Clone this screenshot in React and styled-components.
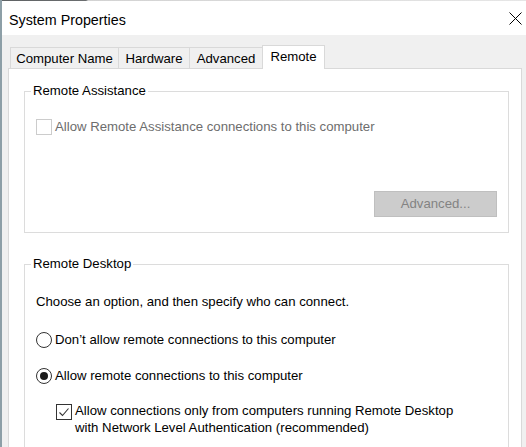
import React from "react";
import styled, { createGlobalStyle } from "styled-components";

const Global = createGlobalStyle`
  html, body { margin: 0; padding: 0; background: #f0f0f0; }
  body { font-family: "Liberation Sans", Arial, sans-serif; }
  * { box-sizing: border-box; }
`;

const Frame = styled.div`
  width: 526px;
  height: 447px;
  overflow: hidden;
  display: flex;
  flex-direction: column;
  border-left: 2px solid #8d9fa7;
  background: #f0f0f0;
  font-size: 13.2px;
  color: #000;
`;

const TopEdge = styled.div`
  height: 1px;
  flex: none;
  background: linear-gradient(to right, #5f6264 0, #6a6d6f 84px, #d2d2d2 86px, #e6e6e6 100%);
`;

const TitleBar = styled.div`
  height: 34px;
  flex: none;
  background: #ffffff;
  display: flex;
  align-items: center;
  justify-content: space-between;
  padding: 0 4px 0 7px;
`;

const Title = styled.span`
  font-size: 14.3px;
  line-height: 18px;
  padding-top: 3px;
  color: #000;
`;

const CloseButton = styled.span`
  display: flex;
  width: 13px;
  height: 13px;
  margin-top: 1px;
`;

const Body = styled.div`
  flex: 1;
  display: flex;
  flex-direction: column;
  padding: 11px 4px 0 6px;
  min-height: 0;
`;

const TabRow = styled.div`
  display: flex;
  align-items: flex-end;
  height: 23px;
  padding-left: 2px;
  position: relative;
  z-index: 1;
  margin-bottom: -1px;
`;

const Tab = styled.div`
  width: ${(p) => p.$w}px;
  height: ${(p) => (p.$active ? 24 : 22)}px;
  margin-right: -1px;
  border: 1px solid #d9d9d9;
  border-bottom: ${(p) => (p.$active ? "none" : "1px solid #d9d9d9")};
  background: ${(p) => (p.$active ? "#ffffff" : "#f0f0f0")};
  display: flex;
  align-items: center;
  justify-content: center;
  padding-top: ${(p) => (p.$active ? 0 : 1)}px;
  padding-bottom: ${(p) => (p.$active ? 2 : 0)}px;
  line-height: 16px;
  white-space: nowrap;
  position: relative;
  z-index: ${(p) => (p.$active ? 2 : 0)};
`;

const Panel = styled.div`
  flex: 1;
  background: #ffffff;
  border: 1px solid #d9d9d9;
  border-bottom: none;
  padding: 14px 12px 0 15px;
  display: flex;
  flex-direction: column;
`;

const Group = styled.fieldset`
  margin: ${(p) => (p.$first ? 0 : 23)}px 0 0 0;
  border: 1px solid #dcdcdc;
  padding: ${(p) => p.$pt}px 11px ${(p) => p.$pb}px 11px;
  min-width: 0;
  display: flex;
  flex-direction: column;
`;

const Legend = styled.legend`
  padding: 0 2px;
  margin-left: -5px;
  line-height: 16px;
  color: #000;
`;

const Row = styled.div`
  display: flex;
  align-items: flex-start;
  gap: 3px;
  margin-top: ${(p) => p.$mt || 0}px;
  margin-left: ${(p) => p.$ml || 0}px;
  line-height: ${(p) => p.$lh || 16}px;
`;

const Label = styled.span`
  color: ${(p) => (p.$disabled ? "#6d6d6d" : "#000")};
  white-space: nowrap;
`;

const Text = styled.div`
  line-height: 16px;
  margin-top: ${(p) => p.$mt || 0}px;
`;

const CheckBox = styled.span`
  flex: none;
  width: 16px;
  height: 16px;
  margin-top: ${(p) => p.$mt || 0}px;
  border: 1px solid ${(p) => (p.$disabled ? "#cccccc" : "#333333")};
  background: #ffffff;
  display: flex;
  align-items: center;
  justify-content: center;
`;

const Radio = styled.span`
  flex: none;
  width: 16px;
  height: 16px;
  border-radius: 50%;
  border: 1px solid #333333;
  background: #ffffff;
  display: flex;
  align-items: center;
  justify-content: center;
  &::after {
    content: "";
    display: ${(p) => (p.$checked ? "block" : "none")};
    width: 8px;
    height: 8px;
    border-radius: 50%;
    background: #1a1a1a;
  }
`;

const ButtonRow = styled.div`
  display: flex;
  justify-content: flex-end;
  margin-top: 56px;
`;

const Button = styled.button`
  width: 123px;
  height: 26px;
  margin: 0;
  padding: 0;
  background: #cccccc;
  border: 1px solid #bfbfbf;
  color: #838383;
  font-family: inherit;
  font-size: 13.2px;
  line-height: 16px;
`;

export default function App() {
  return (
    <>
      <Global />
      <Frame>
        <TopEdge />
        <TitleBar>
          <Title>System Properties</Title>
          <CloseButton>
            <svg width="13" height="13" viewBox="0 0 13 13">
              <path d="M0.5 0.5 L12.5 12.5 M12.5 0.5 L0.5 12.5" stroke="#000" strokeWidth="1" fill="none" />
            </svg>
          </CloseButton>
        </TitleBar>
        <Body>
          <TabRow>
            <Tab $w={109}>Computer Name</Tab>
            <Tab $w={72}>Hardware</Tab>
            <Tab $w={74}>Advanced</Tab>
            <Tab $w={63} $active>Remote</Tab>
          </TabRow>
          <Panel>
            <Group $first $pt={20} $pb={15}>
              <Legend>Remote Assistance</Legend>
              <Row>
                <CheckBox $disabled />
                <Label $disabled>Allow Remote Assistance connections to this computer</Label>
              </Row>
              <ButtonRow>
                <Button disabled>Advanced...</Button>
              </ButtonRow>
            </Group>
            <Group $pt={22} $pb={40}>
              <Legend>Remote Desktop</Legend>
              <Text>Choose an option, and then specify who can connect.</Text>
              <Row $mt={22}>
                <Radio />
                <Label>Don’t allow remote connections to this computer</Label>
              </Row>
              <Row $mt={20}>
                <Radio $checked />
                <Label>Allow remote connections to this computer</Label>
              </Row>
              <Row $mt={18} $ml={20} $lh={17}>
                <CheckBox $mt={2}>
                  <svg width="14" height="14" viewBox="0 0 14 14">
                    <polyline points="2.5,7.5 5.5,10.5 11.5,3.5" stroke="#333" strokeWidth="1.1" fill="none" />
                  </svg>
                </CheckBox>
                <Label>
                  Allow connections only from computers running Remote Desktop
                  <br />
                  with Network Level Authentication (recommended)
                </Label>
              </Row>
            </Group>
          </Panel>
        </Body>
      </Frame>
    </>
  );
}
